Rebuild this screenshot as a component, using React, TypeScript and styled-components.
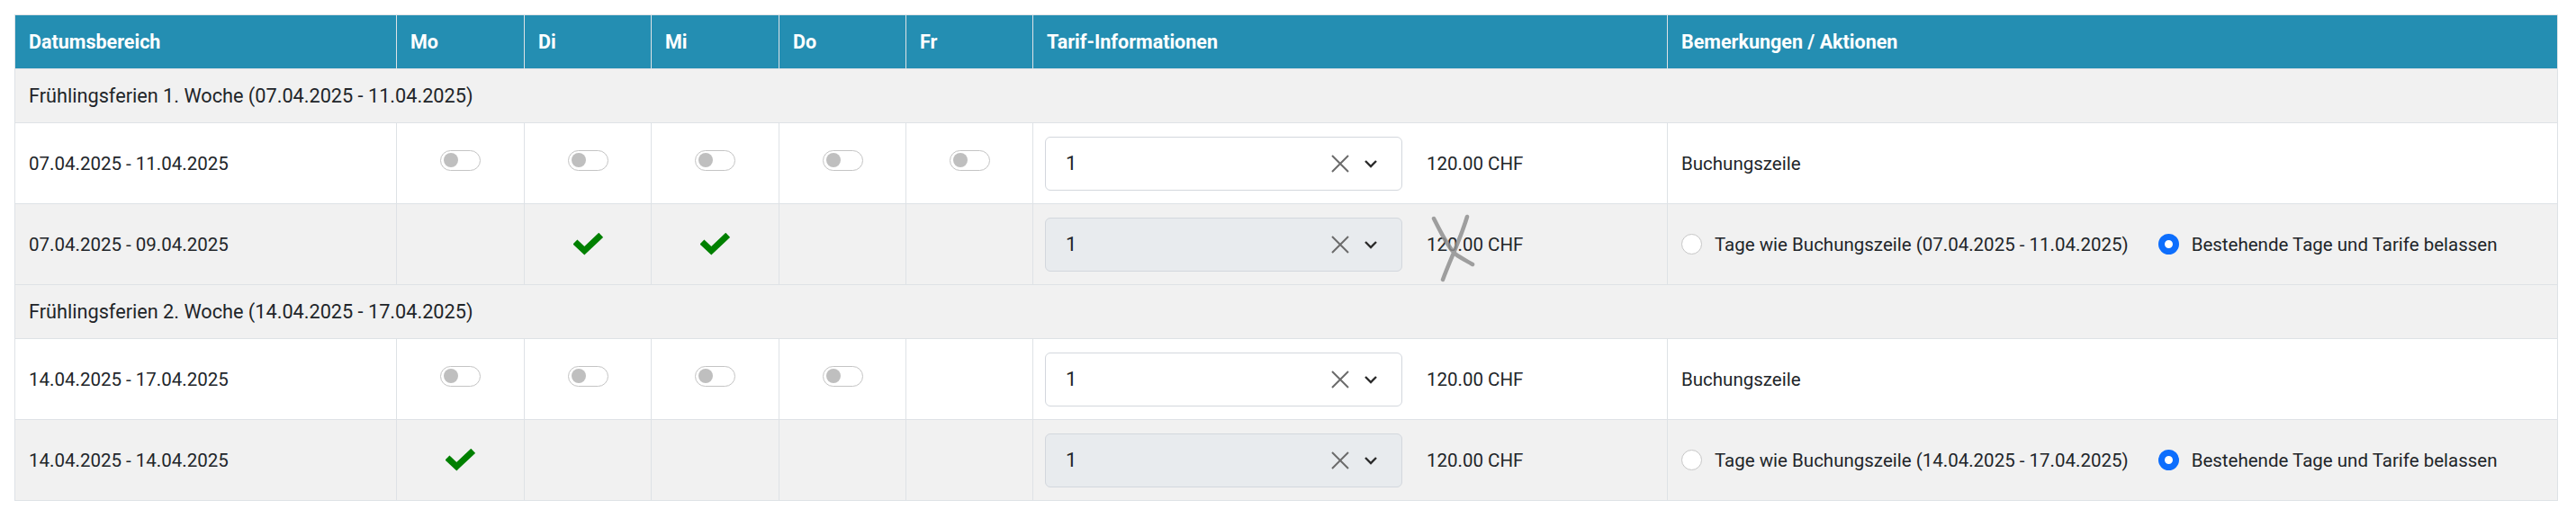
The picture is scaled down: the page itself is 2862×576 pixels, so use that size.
import React from "react";
import styled, { createGlobalStyle } from "styled-components";

const GlobalStyle = createGlobalStyle`
  html, body {
    margin: 0;
    padding: 0;
    background: #ffffff;
  }
  body {
    font-family: Roboto, Lato, "Noto Sans", sans-serif;
    color: #212529;
  }
`;

const Page = styled.div`
  padding: 16px 21px 16px 16px;
`;

const Table = styled.table`
  width: 2825px;
  table-layout: fixed;
  border-collapse: collapse;
  border: 1px solid #dee2e6;
  font-size: 20.5px;
`;

const Col = styled.col<{ $w: number }>`
  width: ${(p) => p.$w}px;
`;

const HeadRow = styled.tr`
  height: 60px;
  background: #248eb2;
`;

const HeadCell = styled.th`
  padding: 0 15px;
  text-align: left;
  font-size: 21.5px;
  font-weight: 700;
  color: #ffffff;
  border: 1px solid #dee2e6;
  white-space: nowrap;
`;

const GroupRow = styled.tr`
  height: 60px;
  background: #f1f1f1;
`;

const GroupCell = styled.td`
  padding: 0 15px;
  font-size: 21.7px;
  border: 1px solid #dee2e6;
  white-space: nowrap;
`;

const Row = styled.tr<{ $shade?: boolean }>`
  height: 90px;
  background: ${(p) => (p.$shade ? "#f1f1f1" : "#ffffff")};
`;

const Cell = styled.td`
  padding: 0 15px;
  border: 1px solid #dee2e6;
  vertical-align: middle;
  white-space: nowrap;
`;

const DayCell = styled.td`
  padding: 0;
  border: 1px solid #dee2e6;
  text-align: center;
  vertical-align: middle;
`;

const DayInner = styled.div`
  display: flex;
  align-items: center;
  justify-content: center;
`;

const Toggle = styled.span`
  position: relative;
  display: inline-block;
  box-sizing: border-box;
  width: 45px;
  height: 23px;
  margin-bottom: 7px;
  border: 1px solid #c4c4c4;
  border-radius: 12px;
  background: #ffffff;

  &::after {
    content: "";
    position: absolute;
    left: 3px;
    top: 2.5px;
    width: 16px;
    height: 16px;
    border-radius: 50%;
    background: #bfbfbf;
  }
`;

const CheckMark = () => (
  <svg width="33" height="26" viewBox="0 0 33 26" aria-hidden="true">
    <path
      d="M2 10 L12.3 19.7 L30.7 2.3"
      fill="none"
      stroke="#008000"
      strokeWidth="7"
      strokeLinejoin="miter"
    />
  </svg>
);

const TarifCell = styled.td`
  padding: 0 13px;
  border: 1px solid #dee2e6;
  vertical-align: middle;
`;

const TarifBox = styled.div`
  display: flex;
  align-items: center;
  gap: 27px;
`;

const Select = styled.div<{ $disabled?: boolean }>`
  box-sizing: border-box;
  display: flex;
  align-items: center;
  width: 397px;
  height: 60px;
  padding: 0 26px 0 22px;
  border: 1px solid #d3d7dd;
  border-radius: 6px;
  background: ${(p) => (p.$disabled ? "#e8ebee" : "#ffffff")};
`;

const SelectValue = styled.span`
  flex: 1;
  font-size: 22px;
  color: #212529;
`;

const SelectIcons = styled.span`
  display: flex;
  align-items: center;
  gap: 16px;
`;

const ClearIcon = () => (
  <svg width="20" height="20" viewBox="0 0 20 20" aria-hidden="true">
    <path d="M1 1 L19 19 M19 1 L1 19" stroke="#6b6b6b" strokeWidth="2" fill="none" />
  </svg>
);

const ChevronIcon = () => (
  <svg width="16" height="10" viewBox="0 0 16 10" aria-hidden="true">
    <path d="M2 2 L8 8 L14 2" stroke="#2b2b2b" strokeWidth="2.4" fill="none" />
  </svg>
);

const Price = styled.span`
  position: relative;
  display: inline-block;
  line-height: 24px;
  white-space: nowrap;
`;

const Strike = styled.svg`
  position: absolute;
  left: 4px;
  top: -23px;
  overflow: visible;
  pointer-events: none;
`;

const Remarks = styled.div`
  display: flex;
  align-items: center;
  gap: 33px;
`;

const RadioOption = styled.label`
  display: flex;
  align-items: center;
  gap: 14px;
  white-space: nowrap;
`;

const RadioDot = styled.span<{ $checked?: boolean }>`
  box-sizing: border-box;
  display: inline-block;
  width: 23px;
  height: 23px;
  border-radius: 50%;
  background: #ffffff;
  border: ${(p) => (p.$checked ? "7px solid #0d6efd" : "1px solid #c6c6c6")};
`;

type Day = "toggle" | "check" | null;

interface Booking {
  range: string;
  days: Day[];
  base: boolean;
  struck?: boolean;
  parent?: string;
}

interface Group {
  title: string;
  rows: Booking[];
}

const groups: Group[] = [
  {
    title: "Frühlingsferien 1. Woche (07.04.2025 - 11.04.2025)",
    rows: [
      {
        range: "07.04.2025 - 11.04.2025",
        days: ["toggle", "toggle", "toggle", "toggle", "toggle"],
        base: true,
      },
      {
        range: "07.04.2025 - 09.04.2025",
        days: [null, "check", "check", null, null],
        base: false,
        struck: true,
        parent: "07.04.2025 - 11.04.2025",
      },
    ],
  },
  {
    title: "Frühlingsferien 2. Woche (14.04.2025 - 17.04.2025)",
    rows: [
      {
        range: "14.04.2025 - 17.04.2025",
        days: ["toggle", "toggle", "toggle", "toggle", null],
        base: true,
      },
      {
        range: "14.04.2025 - 14.04.2025",
        days: ["check", null, null, null, null],
        base: false,
        parent: "14.04.2025 - 17.04.2025",
      },
    ],
  },
];

const columns = ["Datumsbereich", "Mo", "Di", "Mi", "Do", "Fr", "Tarif-Informationen", "Bemerkungen / Aktionen"];
const widths = [424, 142, 141, 142, 141, 141, 705, 989];

const BookingRow = ({ row }: { row: Booking }) => (
  <Row $shade={!row.base}>
    <Cell>{row.range}</Cell>
    {row.days.map((d, i) => (
      <DayCell key={i}>
        <DayInner>
          {d === "toggle" && <Toggle />}
          {d === "check" && <CheckMark />}
        </DayInner>
      </DayCell>
    ))}
    <TarifCell>
      <TarifBox>
        <Select $disabled={!row.base}>
          <SelectValue>1</SelectValue>
          <SelectIcons>
            <ClearIcon />
            <ChevronIcon />
          </SelectIcons>
        </Select>
        <Price>
          120.00 CHF
          {row.struck && (
            <Strike width="52" height="80" viewBox="0 0 52 80" aria-hidden="true">
              <path
                d="M4 6 C 12 22 22 42 30 47 S 42 54 47 57 M41 4 C 34 28 22 52 14 74"
                fill="none"
                stroke="#8f8f8f"
                strokeOpacity="0.85"
                strokeWidth="4.5"
                strokeLinecap="round"
              />
            </Strike>
          )}
        </Price>
      </TarifBox>
    </TarifCell>
    <Cell>
      {row.base ? (
        "Buchungszeile"
      ) : (
        <Remarks>
          <RadioOption>
            <RadioDot />
            Tage wie Buchungszeile ({row.parent})
          </RadioOption>
          <RadioOption>
            <RadioDot $checked />
            Bestehende Tage und Tarife belassen
          </RadioOption>
        </Remarks>
      )}
    </Cell>
  </Row>
);

export default function App() {
  return (
    <>
      <GlobalStyle />
      <Page>
        <Table>
          <colgroup>
            {widths.map((w, i) => (
              <Col key={i} $w={w} />
            ))}
          </colgroup>
          <thead>
            <HeadRow>
              {columns.map((c) => (
                <HeadCell key={c}>{c}</HeadCell>
              ))}
            </HeadRow>
          </thead>
          <tbody>
            {groups.map((g) => (
              <React.Fragment key={g.title}>
                <GroupRow>
                  <GroupCell colSpan={8}>{g.title}</GroupCell>
                </GroupRow>
                {g.rows.map((r) => (
                  <BookingRow key={r.range} row={r} />
                ))}
              </React.Fragment>
            ))}
          </tbody>
        </Table>
      </Page>
    </>
  );
}
